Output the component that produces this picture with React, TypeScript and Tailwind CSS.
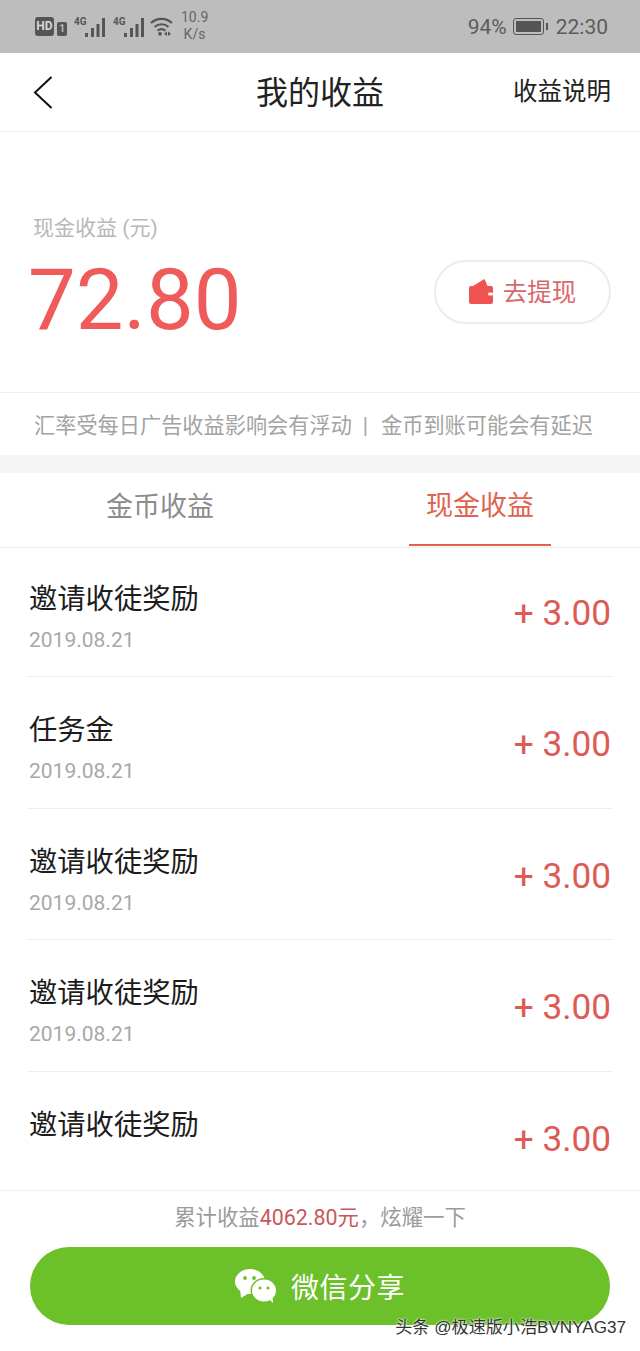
const rows = [
  { title: "邀请收徒奖励", date: "2019.08.21" },
  { title: "任务金", date: "2019.08.21" },
  { title: "邀请收徒奖励", date: "2019.08.21" },
  { title: "邀请收徒奖励", date: "2019.08.21" },
  { title: "邀请收徒奖励", date: "" },
];

function Signal() {
  return (
    <svg width="31" height="20" viewBox="0 0 31 20" fill="#555">
      <text x="0" y="8" fontSize="10" fontWeight="700" fontFamily="Roboto, sans-serif">4G</text>
      <rect x="11" y="16" width="3" height="4" />
      <rect x="17" y="11" width="3" height="9" />
      <rect x="22.5" y="7" width="3" height="13" />
      <rect x="28" y="1" width="3" height="19" />
    </svg>
  );
}

function Wifi() {
  return (
    <svg width="23" height="19" viewBox="0 0 23 19" fill="none" stroke="#555" strokeWidth="2.2">
      <path d="M1 6C7 .5 16 .5 22 6" />
      <path d="M4.5 10C8.5 6.3 14.5 6.3 18.5 10" />
      <path d="M7.5 13.6C10 11.8 13 11.8 15.5 13.6" />
      <circle cx="10" cy="16.8" r="1.9" fill="#555" stroke="none" />
      <path d="M17 14.5v4.5l-3-2.2ZM18 14.5v4.5l3-2.2Z" fill="#555" stroke="none" />
    </svg>
  );
}

function StatusBar() {
  return (
    <div className="h-[53px] shrink-0 bg-[#bdbdbd] flex items-center justify-between pl-[35px] pr-[32px] text-[#5c5c5c] font-['Roboto',sans-serif]">
      <div className="flex items-center">
        <div className="w-[19px] h-[19px] rounded-[3px] bg-[#555] text-[#d8d8d8] text-[12px] font-bold leading-[19px] text-center">HD</div>
        <div className="ml-[3px] mt-[4px] w-[10px] h-[14px] rounded-[2px] bg-[#555] text-[#bdbdbd] text-[10px] font-bold leading-[14px] text-center">1</div>
        <div className="ml-[7px]"><Signal /></div>
        <div className="ml-[8px]"><Signal /></div>
        <div className="ml-[6px]"><Wifi /></div>
        <div className="ml-[8px] w-[27px] text-[14px] leading-[17px] text-center text-[#666] mt-[-1px]">
          <div>10.9</div>
          <div>K/s</div>
        </div>
      </div>
      <div className="flex items-center text-[21px]">
        <span className="mt-[2px]">94%</span>
        <div className="ml-[6px] w-[31px] h-[17px] rounded-[3px] border border-[#555] p-[2px]">
          <div className="w-[25px] h-full bg-[#555]" />
        </div>
        <div className="ml-[2px] w-[2px] h-[7px] bg-[#555]" />
        <span className="ml-[8px] mt-[2px]">22:30</span>
      </div>
    </div>
  );
}

function BackArrow() {
  return (
    <svg width="20" height="33" viewBox="0 0 20 33" fill="none" stroke="#111" strokeWidth="2">
      <path d="M18.5 1 2 16.5 18.5 32" />
    </svg>
  );
}

function WalletIcon() {
  return (
    <svg width="24" height="25" viewBox="0 0 24 25">
      <path d="M4 7 15.5 0 18.5 7Z" fill="#ee5350" />
      <path d="M0 9a2 2 0 0 1 2-2h20a2 2 0 0 1 2 2v14a2 2 0 0 1-2 2H2a2 2 0 0 1-2-2Z" fill="#ee5350" />
      <rect x="19" y="13.5" width="5" height="3" rx="1.5" fill="#fff" />
    </svg>
  );
}

function WeChatIcon() {
  return (
    <svg width="42" height="34" viewBox="0 0 42 34" fill="#fff">
      <ellipse cx="15" cy="12.5" rx="15" ry="12.5" />
      <path d="M5 20 6 29 14 24Z" />
      <ellipse cx="29" cy="21.5" rx="13.5" ry="12.5" fill="#6cc02a" />
      <ellipse cx="29" cy="21.5" rx="12" ry="11" />
      <path d="M34 30 38 34 37.5 27Z" />
      <circle cx="10" cy="9" r="1.9" fill="#6cc02a" />
      <circle cx="19" cy="9" r="1.9" fill="#6cc02a" />
      <circle cx="25" cy="19" r="1.6" fill="#6cc02a" />
      <circle cx="33" cy="19" r="1.6" fill="#6cc02a" />
    </svg>
  );
}

export default function App() {
  return (
    <div className="relative w-[640px] h-[1351px] overflow-hidden bg-white flex flex-col font-['Roboto','Noto_Sans_CJK_SC',sans-serif]">
      <StatusBar />

      <div className="h-[79px] shrink-0 border-b border-[#efefef] flex items-center justify-between pl-[33px] pr-[29px] relative">
        <BackArrow />
        <div className="absolute left-0 right-0 text-center text-[32px] text-[#222] mt-[2px]">我的收益</div>
        <div className="text-[24.5px] text-[#222]">收益说明</div>
      </div>

      <div className="h-[261px] shrink-0 border-b border-[#efefef] pl-[28px] pr-[29px] pt-[81px]">
        <div className="pl-[5px] text-[21px] leading-[30px] text-[#b8b8b8]">现金收益 (元)</div>
        <div className="flex items-center justify-between mt-[13px]">
          <div className="text-[85px] leading-[88px] text-[#ef5b5b]">72.80</div>
          <div className="w-[177px] h-[64px] rounded-full border-2 border-[#ececec] flex items-center justify-center gap-[10px] mt-[-17px]">
            <WalletIcon />
            <span className="text-[24.5px] text-[#d9686a] mt-[3px]">去提现</span>
          </div>
        </div>
      </div>

      <div className="h-[62px] shrink-0 flex items-center pl-[34px] pt-[4px] text-[21.2px] text-[#a3a3a3]">
        <span>汇率受每日广告收益影响会有浮动</span>
        <span className="ml-[11px] mr-[13px]">|</span>
        <span>金币到账可能会有延迟</span>
      </div>
      <div className="h-[18px] shrink-0 bg-[#f5f5f5]" />

      <div className="h-[75px] shrink-0 flex border-b border-[#ececec] text-[27px]">
        <div className="flex-1 flex items-center justify-center pb-[6px] text-[#8c8c8c]">金币收益</div>
        <div className="flex-1 flex justify-center">
          <div className="w-[142px] h-[73px] pb-[4px] border-b-2 border-[#e0624f] flex items-center justify-center text-[#e0624f]">现金收益</div>
        </div>
      </div>

      <div className="flex-1 min-h-0 overflow-hidden px-[27px]">
        <div className="mt-[-2.5px]">
          {rows.map((row, i) => (
            <div key={i} className="h-[131.5px] border-b border-[#efefef] flex items-start justify-between pr-[2px]">
              <div className="pl-[2px] pt-[34px]">
                <div className="text-[28.3px] leading-[40px] text-[#1c1c1c]">{row.title}</div>
                {row.date && <div className="mt-[6px] text-[21px] leading-[28px] text-[#a8a8a8]">{row.date}</div>}
              </div>
              <div className="self-center text-[35.2px] text-[#dd5a55] mt-[5px]">+ 3.00</div>
            </div>
          ))}
        </div>
      </div>

      <div className="h-[161px] shrink-0 border-t border-[#efefef] bg-white px-[30px] pt-[10px]">
        <div className="h-[33px] text-center text-[21.4px] leading-[33px] text-[#9b9b9b]">
          累计收益<span className="text-[#c8585c]">4062.80元</span>，炫耀一下
        </div>
        <div className="mt-[13px] h-[78px] rounded-full bg-[#6cc02a] flex items-center justify-center gap-[14px] text-[28px] text-white">
          <WeChatIcon />
          <span className="tracking-[0.5px] mt-[5px]">微信分享</span>
        </div>
      </div>

      <div className="absolute right-[14px] top-[1316px] text-[17.1px] leading-[24px] text-[#333] font-['Liberation_Sans','Noto_Sans_CJK_SC',sans-serif] [text-shadow:0_0_2px_#fff,0_0_2px_#fff]">
        头条 @极速版小浩BVNYAG37
      </div>
    </div>
  );
}
